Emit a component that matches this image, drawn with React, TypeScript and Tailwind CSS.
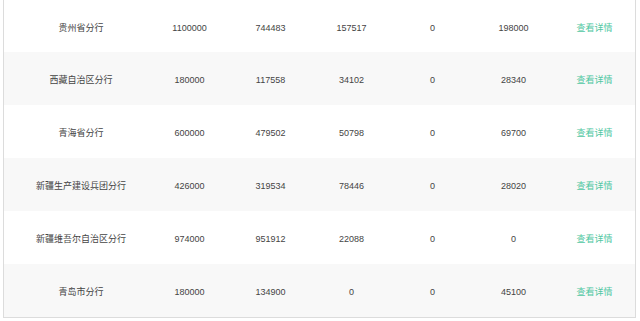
const rows = [
  { name: "贵州省分行", a: "1100000", b: "744483", c: "157517", d: "0", e: "198000" },
  { name: "西藏自治区分行", a: "180000", b: "117558", c: "34102", d: "0", e: "28340" },
  { name: "青海省分行", a: "600000", b: "479502", c: "50798", d: "0", e: "69700" },
  { name: "新疆生产建设兵团分行", a: "426000", b: "319534", c: "78446", d: "0", e: "28020" },
  { name: "新疆维吾尔自治区分行", a: "974000", b: "951912", c: "22088", d: "0", e: "0" },
  { name: "青岛市分行", a: "180000", b: "134900", c: "0", d: "0", e: "45100" },
];

export default function App() {
  return (
    <div
      className="h-[321px] w-[640px] overflow-hidden bg-white pl-[3px] pr-[4px]"
      style={{ fontFamily: '"Liberation Sans", "Noto Sans CJK SC", sans-serif' }}
    >
      <div className="border-x border-b border-[#dcdcdc]">
        {rows.map((row, i) => (
          <div
            key={row.name}
            className={`grid grid-cols-[1fr_81px_81px_81px_81px_81px_81px] items-center pt-[5px] text-center text-[9px] text-[#444] ${
              i === 0 ? "h-[52px]" : "h-[53px]"
            } ${i % 2 === 1 ? "bg-[#f8f8f8]" : "bg-white"}`}
          >
            <div className="pl-[9px]">{row.name}</div>
            <div>{row.a}</div>
            <div>{row.b}</div>
            <div>{row.c}</div>
            <div>{row.d}</div>
            <div>{row.e}</div>
            <div className="text-[#4fc7a2]">查看详情</div>
          </div>
        ))}
      </div>
    </div>
  );
}
